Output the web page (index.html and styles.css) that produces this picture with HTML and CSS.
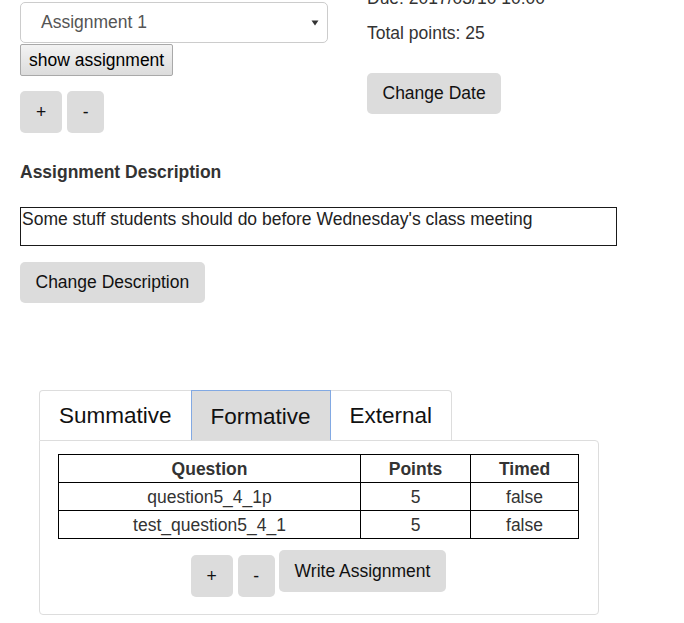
FILE: index.html
```html
<!DOCTYPE html>
<html>
<head>
<meta charset="utf-8">
<link rel="stylesheet" href="styles.css">
</head>
<body>
<div class="page">
  <div class="top">
    <div class="left">
      <div class="select">
        <span>Assignment 1</span>
        <svg class="caret" width="8" height="6" viewBox="0 0 8 6"><path d="M0.5 0.5 L7.5 0.5 L4 5.5 Z" fill="#333"/></svg>
      </div>
      <button class="btn-show">show assignment</button>
      <div class="pm">
        <button class="btn btn-plus">+</button>
        <button class="btn">-</button>
      </div>
    </div>
    <div class="right">
      <p class="info">Due: 2017/03/10 10:00</p>
      <p class="info">Total points: 25</p>
      <button class="btn btn-date">Change Date</button>
    </div>
  </div>

  <div class="desc-title">Assignment Description</div>
  <div class="desc-box">Some stuff students should do before Wednesday's class meeting</div>
  <button class="btn btn-desc">Change Description</button>

  <div class="tabs">
    <div class="tab">Summative</div>
    <div class="tab active">Formative</div>
    <div class="tab">External</div>
  </div>
  <div class="panel">
    <table class="qtable">
      <colgroup>
        <col class="c1"><col class="c2"><col class="c3">
      </colgroup>
      <thead>
        <tr><th>Question</th><th>Points</th><th>Timed</th></tr>
      </thead>
      <tbody>
        <tr><td>question5_4_1p</td><td>5</td><td>false</td></tr>
        <tr><td>test_question5_4_1</td><td>5</td><td>false</td></tr>
      </tbody>
    </table>
    <div class="actions">
      <button class="btn btn-low btn-plus">+</button>
      <button class="btn btn-low btn-minus">-</button>
      <button class="btn btn-write">Write Assignment</button>
    </div>
  </div>
</div>
</body>
</html>
```
FILE: styles.css
```css
html, body {
  margin: 0;
  padding: 0;
  background: #fff;
}
body {
  font-family: "Liberation Sans", Arial, sans-serif;
  font-size: 17.5px;
  color: #333;
  overflow: hidden;
}
.page {
  padding: 0 20px;
}
.top {
  display: grid;
  grid-template-columns: 347px 1fr;
  margin-top: 2px;
  align-items: start;
}
.left {
  display: flex;
  flex-direction: column;
  align-items: flex-start;
}
.select {
  box-sizing: border-box;
  width: 308px;
  height: 41px;
  border: 1px solid #ccc;
  border-radius: 5px;
  display: flex;
  align-items: center;
  justify-content: space-between;
  padding: 0 8px 0 20px;
  color: #555;
  font-size: 17.5px;
}
.caret {
  display: block;
}
.btn-show {
  box-sizing: border-box;
  margin-top: 1px;
  height: 32px;
  padding: 0 8px;
  font-family: "Liberation Sans", Arial, sans-serif;
  font-size: 17.5px;
  color: #000;
  background: linear-gradient(#f3f3f3, #dcdcdc);
  border: 1px solid #a9a9a9;
  border-radius: 2px;
}
.pm {
  display: flex;
  gap: 5px;
  margin-top: 15px;
}
.btn {
  box-sizing: border-box;
  height: 42px;
  padding: 0 15.5px;
  background: #dcdcdc;
  border: none;
  border-radius: 5px;
  font-family: "Liberation Sans", Arial, sans-serif;
  font-size: 17.5px;
  color: #111;
}
.btn-plus {
  padding: 0 16px;
}
.right {
  margin-top: -16px;
  display: flex;
  flex-direction: column;
  align-items: flex-start;
}
.info {
  margin: 0 0 10px;
  line-height: 25px;
}
.btn-date {
  margin-top: 17px;
  height: 41px;
}
.desc-title {
  margin-top: 27px;
  font-weight: bold;
  line-height: 25px;
}
.desc-box {
  box-sizing: border-box;
  margin-top: 22px;
  width: 597px;
  height: 39px;
  border: 1px solid #1a1a1a;
  padding: 1px;
  line-height: 21px;
  color: #222;
}
.btn-desc {
  margin-top: 16px;
  height: 41px;
}
.tabs {
  display: flex;
  width: max-content;
  margin-top: 87px;
  margin-left: 19px;
  border: 1px solid #ddd;
  border-bottom: none;
  border-radius: 4px 4px 0 0;
}
.tab {
  box-sizing: border-box;
  height: 49px;
  line-height: 49px;
  padding: 0 19px;
  font-size: 22.5px;
  color: #111;
}
.tab.active {
  margin-top: -1px;
  height: 50px;
  padding: 1px 19px 0;
  line-height: 49px;
  background: #dcdcdc;
  border: 1px solid #82a9e3;
  border-bottom: none;
}
.panel {
  box-sizing: border-box;
  margin-left: 19px;
  width: 560px;
  border: 1px solid #ddd;
  border-radius: 0 4px 4px 4px;
  padding: 13px 19px 17px 18px;
}
.qtable {
  width: 520px;
  border-collapse: collapse;
  table-layout: fixed;
}
.c1 { width: 302px; }
.c2 { width: 110px; }
.c3 { width: 108px; }
.qtable th, .qtable td {
  border: 1px solid #000;
  height: 27px;
  padding: 0;
  text-align: center;
  line-height: 26px;
  color: #333;
}
.qtable th {
  font-weight: bold;
}
.actions {
  display: flex;
  justify-content: center;
  align-items: flex-start;
  gap: 5px;
  margin-top: 11px;
}
.btn-low {
  margin-top: 5px;
}
.btn-minus {
  margin-right: -1px;
}
.btn-write {
  padding: 0 16px;
}
```
